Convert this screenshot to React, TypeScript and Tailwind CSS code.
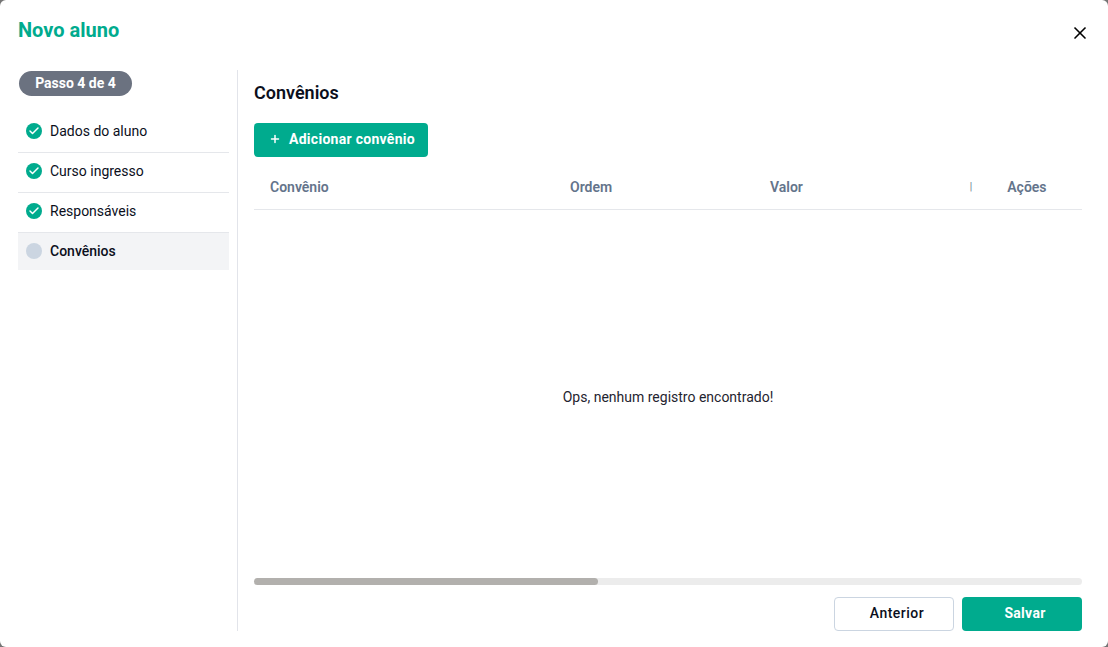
import React from "react";
import { Check, Plus, X } from "lucide-react";

const steps = [
  { label: "Dados do aluno", done: true },
  { label: "Curso ingresso", done: true },
  { label: "Responsáveis", done: true },
  { label: "Convênios", done: false },
];

const App: React.FC = () => {
  return (
    <div className="h-[647px] w-full bg-[#757575] font-['Roboto',sans-serif]">
      <div className="flex h-full flex-col rounded-[6px] bg-white">
        <div className="flex h-[70px] items-start justify-between pl-[18px] pr-[18px]">
          <h2 className="mt-[17px] text-[20px] leading-[26px] font-bold text-[#00ab8e]">Novo aluno</h2>
          <button className="mt-[23px] text-black">
            <X className="h-5 w-5" strokeWidth={2} />
          </button>
        </div>
        <div className="flex h-[561px] pl-[18px] pr-[26px]">
          <aside className="w-[220px] border-r border-[#e2e4ea] pr-2">
            <div className="ml-px mt-px flex h-[25px] w-[113px] items-center justify-center rounded-full bg-[#6b7280] pb-px text-sm font-bold text-white">
              Passo 4 de 4
            </div>
            <ul className="mt-4">
              {steps.map((step, i) => (
                <li
                  key={step.label}
                  className={`flex items-center gap-2 pl-2 text-sm ${
                    step.done
                      ? "border-b border-[#e5e7eb] font-normal text-[#0b0f1c]"
                      : "h-[37px] bg-[#f3f4f6] pb-px font-medium text-[#0b0f1c]"
                  } ${step.done ? (i === 0 ? "h-[41px] pb-[2px]" : "h-10 pb-[3px]") : ""}`}
                >
                  {step.done ? (
                    <span className="flex h-4 w-4 items-center justify-center rounded-full bg-[#00ab8e]">
                      <Check className="h-3 w-3 text-white" strokeWidth={3} />
                    </span>
                  ) : (
                    <span className="h-4 w-4 rounded-full bg-[#cbd5e1]" />
                  )}
                  {step.label}
                </li>
              ))}
            </ul>
          </aside>
          <main className="flex min-w-0 flex-1 flex-col pl-4">
            <h3 className="mt-3 text-lg leading-[22px] font-semibold text-[#0b0f1c]">Convênios</h3>
            <button className="mt-[19px] flex h-[34px] w-[174px] items-center gap-2 rounded-[4px] bg-[#00ab8e] pb-[2px] pl-[15px] text-sm font-bold tracking-[0.28px] text-white">
              <Plus className="h-3 w-3" strokeWidth={3} />
              Adicionar convênio
            </button>
            <div className="flex h-[53px] items-center border-b border-[#e5e7eb] pl-4 pt-2 text-sm font-semibold text-[#64748b]">
              <span className="w-[300px]">Convênio</span>
              <span className="w-[200px]">Ordem</span>
              <span className="w-[200px]">Valor</span>
              <span className="ml-[-0.15px] w-[37.4px] text-[10px] font-normal">|</span>
              <span>Ações</span>
            </div>
            <div className="flex flex-1 items-center justify-center pt-[6px] text-sm text-[#1f2430]">
              Ops, nenhum registro encontrado!
            </div>
            <div className="h-[7px] rounded-full bg-[#ececec]">
              <div className="h-full w-[344px] rounded-full bg-[#b2b0ad]" />
            </div>
            <div className="mt-3 flex justify-end gap-2">
              <button className="h-[34px] w-[120px] rounded-[4px] border border-[#cbd5e1] bg-white pb-[2px] pl-[6px] text-sm font-medium tracking-[0.5px] text-[#0b0f1c]">
                Anterior
              </button>
              <button className="h-[34px] w-[120px] rounded-[4px] bg-[#00ab8e] pb-[2px] pl-[6px] text-sm font-bold tracking-[0.3px] text-white">
                Salvar
              </button>
            </div>
          </main>
        </div>
      </div>
    </div>
  );
};

export default App;
